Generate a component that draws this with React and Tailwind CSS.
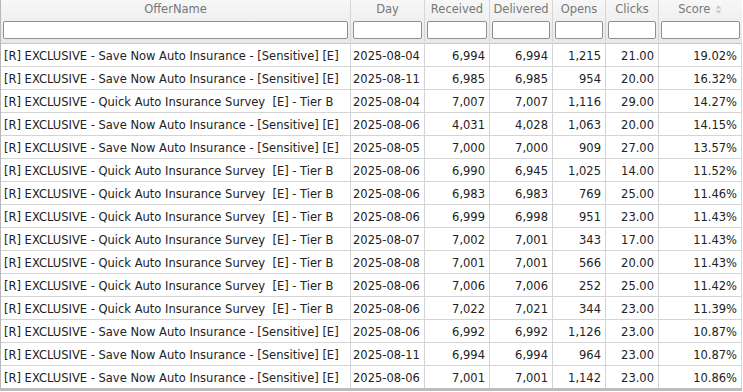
import React from 'react';

const SAVE = '[R] EXCLUSIVE - Save Now Auto Insurance - [Sensitive] [E]';
const QUICK = '[R] EXCLUSIVE - Quick Auto Insurance Survey  [E] - Tier B';

const rows = [
  [SAVE, '2025-08-04', '6,994', '6,994', '1,215', '21.00', '19.02%'],
  [SAVE, '2025-08-11', '6,985', '6,985', '954', '20.00', '16.32%'],
  [QUICK, '2025-08-04', '7,007', '7,007', '1,116', '29.00', '14.27%'],
  [SAVE, '2025-08-06', '4,031', '4,028', '1,063', '20.00', '14.15%'],
  [SAVE, '2025-08-05', '7,000', '7,000', '909', '27.00', '13.57%'],
  [QUICK, '2025-08-06', '6,990', '6,945', '1,025', '14.00', '11.52%'],
  [QUICK, '2025-08-06', '6,983', '6,983', '769', '25.00', '11.46%'],
  [QUICK, '2025-08-06', '6,999', '6,998', '951', '23.00', '11.43%'],
  [QUICK, '2025-08-07', '7,002', '7,001', '343', '17.00', '11.43%'],
  [QUICK, '2025-08-08', '7,001', '7,001', '566', '20.00', '11.43%'],
  [QUICK, '2025-08-06', '7,006', '7,006', '252', '25.00', '11.42%'],
  [QUICK, '2025-08-06', '7,022', '7,021', '344', '23.00', '11.39%'],
  [SAVE, '2025-08-06', '6,992', '6,992', '1,126', '23.00', '10.87%'],
  [SAVE, '2025-08-11', '6,994', '6,994', '964', '23.00', '10.87%'],
  [SAVE, '2025-08-06', '7,001', '7,001', '1,142', '23.00', '10.86%'],
];

const columns = [
  { label: 'OfferName', width: 'w-[350px]' },
  { label: 'Day', width: 'w-[74px]' },
  { label: 'Received', width: 'w-[65px]' },
  { label: 'Delivered', width: 'w-[63px]' },
  { label: 'Opens', width: 'w-[53px]' },
  { label: 'Clicks', width: 'w-[53px]' },
  { label: 'Score', width: 'w-[83px]', sortable: true },
];

const SortIcon = () => (
  <svg width="7" height="9" viewBox="0 0 7 9" className="ml-[5px] inline-block align-middle">
    <path d="M3.5 0.5 L6.5 3.5 L0.5 3.5 Z" fill="#c4c4c4" />
    <path d="M3.5 8.5 L6.5 5.5 L0.5 5.5 Z" fill="#c4c4c4" />
  </svg>
);

export default function App() {
  return (
    <div className="w-[743px] h-[392px] overflow-hidden bg-white font-['DejaVu_Sans',sans-serif]">
      <table className="w-[741px] table-fixed border-collapse text-[11.5px]">
        <colgroup>
          {columns.map((c) => (
            <col key={c.label} className={c.width} />
          ))}
        </colgroup>
        <thead className="bg-gradient-to-b from-[#f7f7f7] to-[#e8e8e8]">
          <tr>
            {columns.map((c) => (
              <th
                key={c.label}
                className="h-[19px] border-l border-[#d6d6d6] first:border-l-[#b8b8b8] text-center font-normal text-[#777] leading-[17px] align-middle"
              >
                {c.label}
                {c.sortable && <SortIcon />}
              </th>
            ))}
          </tr>
          <tr className="border-b border-[#c6c6c6]">
            {columns.map((c) => (
              <th key={c.label} className="h-[24px] px-[2px] pt-[2px] pb-[3px] border-l border-[#d6d6d6] first:border-l-[#b8b8b8] align-top">
                <div className="h-[18px] w-full rounded-[2px] border border-[#8f8f8f] bg-white" />
              </th>
            ))}
          </tr>
        </thead>
        <tbody className="text-[#222]">
          {rows.map((r, i) => (
            <tr key={i} className="h-[23px] border-b border-[#d4d4d4] last:border-b-[3px] last:border-b-[#bdbdbd]">
              {r.map((cell, j) => (
                <td
                  key={j}
                  className={`border-x border-[#d4d4d4] first:border-l-[#b8b8b8] whitespace-pre overflow-hidden pt-[2px] leading-[20px] ${
                    j === 0 ? 'pl-[3px] text-left' : j === 1 ? 'pl-[2px] text-left' : 'pr-[4px] text-right'
                  }`}
                >
                  {cell}
                </td>
              ))}
            </tr>
          ))}
        </tbody>
      </table>
    </div>
  );
}
